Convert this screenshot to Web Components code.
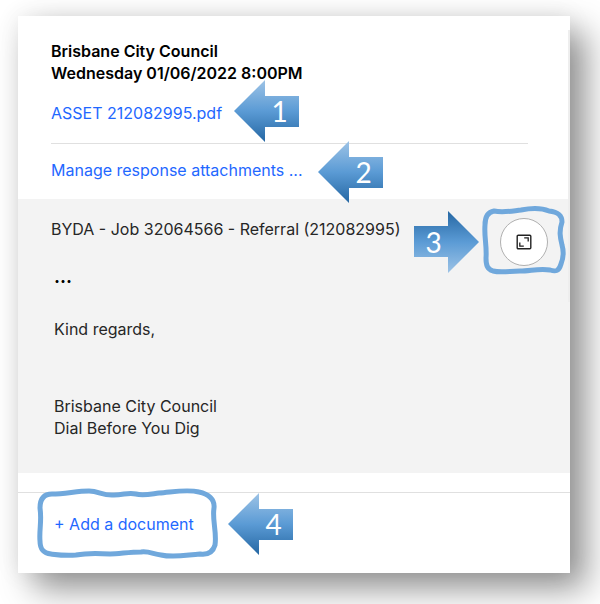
<!DOCTYPE html>
<html lang="en">
<head>
  <meta charset="UTF-8">
  <meta name="viewport" content="width=device-width, initial-scale=1.0">
  <title>Referral response</title>
  <style>
    body {
      margin: 0;
      padding: 16px 30px 31px 18px;
      background: #fff;
      color: #262626;
      font-family: Inter, "Open Sans", sans-serif;
      font-size: 16px;
      line-height: 22px;
    }
  </style>
</head>
<body>
  <response-card>
    <response-header slot="header" council="Brisbane City Council" date="Wednesday 01/06/2022 8:00PM">
      <callout-anchor>
        <text-link>ASSET 212082995.pdf</text-link>
        <step-arrow slot="note" style="--x: 183px; --y: -22px">1</step-arrow>
      </callout-anchor>
    </response-header>
    <callout-anchor slot="manage">
      <text-link>Manage response attachments ...</text-link>
      <step-arrow slot="note" style="--x: 267px; --y: -18px">2</step-arrow>
    </callout-anchor>
    <message-panel slot="message" subject="BYDA - Job 32064566 - Referral (212082995)">
      <callout-anchor slot="action">
        <expand-button></expand-button>
        <hand-outline slot="note" shape="square" style="--x: -20px; --y: -16px"></hand-outline>
        <step-arrow slot="note" direction="right" style="--x: -86px; --y: -7px">3</step-arrow>
      </callout-anchor>
      <div>Kind regards,</div>
      <div slot="signature">Brisbane City Council<br>Dial Before You Dig</div>
    </message-panel>
    <callout-anchor slot="footer">
      <text-link>+ Add a document</text-link>
      <hand-outline slot="note" shape="wide" style="--x: -19px; --y: -29px"></hand-outline>
      <step-arrow slot="note" style="--x: 174px; --y: -20px">4</step-arrow>
    </callout-anchor>
  </response-card>

  <script>
    class ResponseCard extends HTMLElement {
      constructor() {
        super();
        this.attachShadow({ mode: 'open' });
      }

      connectedCallback() {
        this.shadowRoot.innerHTML = `
          <style>
            :host {
              display: block;
              position: relative;
              background: #fff;
              box-shadow: 16px 16px 32px rgba(0, 0, 0, 0.42), 0 0 24px rgba(0, 0, 0, 0.08);
            }

            /* scroll track down the right side */
            :host::after {
              content: "";
              position: absolute;
              top: 14px;
              right: 0;
              width: 2px;
              height: 272px;
              background: #eee;
            }

            .top {
              padding: 24px 42px 18px 33px;
            }

            hr {
              margin: 19px 0 15px;
              border: 0;
              border-top: 1px solid #e0e0e0;
            }

            footer {
              margin-top: 19px;
              padding: 20px 36px 38px;
              border-top: 1px solid #e0e0e0;
            }
          </style>

          <div class="top">
            <slot name="header"></slot>
            <hr>
            <slot name="manage"></slot>
          </div>
          <slot name="message"></slot>
          <footer><slot name="footer"></slot></footer>
        `;
      }
    }

    class ResponseHeader extends HTMLElement {
      constructor() {
        super();
        this.attachShadow({ mode: 'open' });
      }

      connectedCallback() {
        this.shadowRoot.innerHTML = `
          <style>
            :host { display: block; }

            p {
              margin: 0 0 18px;
              color: #000;
              font-weight: 600;
            }
          </style>
          <p>${this.getAttribute('council')}<br>${this.getAttribute('date')}</p>
          <slot></slot>
        `;
      }
    }

    class TextLink extends HTMLElement {
      constructor() {
        super();
        this.attachShadow({ mode: 'open' });
      }

      connectedCallback() {
        this.shadowRoot.innerHTML = `
          <style>
            :host { display: block; }

            a {
              color: #1f68ff;
              text-decoration: none;

              &:hover { text-decoration: underline; }
            }
          </style>
          <a href="#"><slot></slot></a>
        `;
      }
    }

    class MessagePanel extends HTMLElement {
      constructor() {
        super();
        this.attachShadow({ mode: 'open' });
      }

      connectedCallback() {
        this.shadowRoot.innerHTML = `
          <style>
            :host {
              display: block;
              padding: 19px 22px 34px 33px;
              background: #f3f3f3;
            }

            .subject {
              display: flex;
              justify-content: space-between;
              align-items: flex-start;
            }

            .body {
              display: flex;
              flex-direction: column;
              padding-left: 3px;
            }

            .more {
              margin-bottom: 30px;
              color: #000;
              font-size: 18px;
              font-weight: 700;
            }

            .signature { margin-top: 55px; }
          </style>
          <div class="subject">
            <span>${this.getAttribute('subject')}</span>
            <slot name="action"></slot>
          </div>
          <div class="body">
            <span class="more">...</span>
            <slot></slot>
            <div class="signature"><slot name="signature"></slot></div>
          </div>
        `;
      }
    }

    class ExpandButton extends HTMLElement {
      constructor() {
        super();
        this.attachShadow({ mode: 'open' });
      }

      connectedCallback() {
        this.shadowRoot.innerHTML = `
          <style>
            :host { display: block; }

            button {
              display: flex;
              align-items: center;
              justify-content: center;
              width: 48px;
              height: 48px;
              padding: 0;
              border: 1px solid #b0b0b0;
              border-radius: 50%;
              background: #fff;
              cursor: pointer;
            }
          </style>
          <button type="button" aria-label="Expand message">
            <svg width="16" height="16" viewBox="0 0 16 16" fill="none" stroke="#222">
              <rect x="1.2" y="1.2" width="13.6" height="13.6" rx="1" stroke-width="1.4"/>
              <path d="M8.2 3.8H12.2V7.4M3.8 8.6V12.2H7.8" stroke-width="1.3"/>
            </svg>
          </button>
        `;
      }
    }

    // Holds page content and the notes that lie over it
    class CalloutAnchor extends HTMLElement {
      constructor() {
        super();
        this.attachShadow({ mode: 'open' });
      }

      connectedCallback() {
        this.shadowRoot.innerHTML = `
          <style>
            :host {
              display: block;
              position: relative;
            }

            ::slotted([slot="note"]) {
              position: absolute;
              left: var(--x);
              top: var(--y);
              z-index: 1;
              pointer-events: none;
            }
          </style>
          <slot></slot>
          <slot name="note"></slot>
        `;
      }
    }

    class StepArrow extends HTMLElement {
      constructor() {
        super();
        this.attachShadow({ mode: 'open' });
      }

      connectedCallback() {
        const turn = this.getAttribute('direction') === 'right' ? 'rotate(180 32.5 31)' : '';
        this.shadowRoot.innerHTML = `
          <style>
            :host {
              display: grid;
              width: 65px;
              height: 62px;
              color: #fff;
              font: 28px/62px Lato, sans-serif;
            }

            svg, span { grid-area: 1 / 1; }

            span {
              padding-left: 26px;
              text-align: center;
            }

            :host([direction="right"]) span { padding: 0 26px 0 0; }
          </style>
          <svg width="65" height="62" viewBox="0 0 65 62">
            <defs>
              <linearGradient id="blue" x1="0" y1="0" x2="0" y2="1">
                <stop offset="0" stop-color="#9dc3e6"/>
                <stop offset="0.5" stop-color="#5b9bd5"/>
                <stop offset="1" stop-color="#2567a3"/>
              </linearGradient>
            </defs>
            <g transform="${turn}">
              <path d="M0 31L31 0V16H65V47H31V62Z" fill="url(#blue)"/>
            </g>
          </svg>
          <span><slot></slot></span>
        `;
      }
    }

    const outlines = {
      square: {
        width: 90,
        height: 78,
        path: 'M5 23C5 14 8 10 14 9C23 11 32 9 41 8C51 6 62 6 69 9C78 10 82 13 82 20C79 29 80 35 82 43C84 50 83 57 81 62C79 69 76 70 70 68C60 66 50 69 40 69C30 69 21 71 13 69C7 67 6 63 6 56C7 44 4 35 5 23Z'
      },
      wide: {
        width: 186,
        height: 78,
        path: 'M5 24C5 15 9 10 17 10C30 10 42 7 54 7C64 7 68 12 79 11C89 11 93 8 101 10C108 12 116 10 124 9C138 8 152 5 164 8C173 10 180 15 179 24C177 36 182 48 180 61C178 68 173 71 165 70C151 71 139 74 126 71C118 70 114 67 106 68C94 68 84 70 75 70C62 69 51 69 41 71C31 72 24 71 16 70C8 69 5 65 5 57C4 46 7 37 5 24Z'
      }
    };

    class HandOutline extends HTMLElement {
      constructor() {
        super();
        this.attachShadow({ mode: 'open' });
      }

      connectedCallback() {
        const { width, height, path } = outlines[this.getAttribute('shape')];
        this.shadowRoot.innerHTML = `
          <style>
            :host { display: block; }

            svg { display: block; }
          </style>
          <svg width="${width}" height="${height}" viewBox="0 0 ${width} ${height}">
            <path d="${path}" fill="none" stroke="#70a8dc" stroke-width="5" stroke-linejoin="round"/>
          </svg>
        `;
      }
    }

    customElements.define('response-card', ResponseCard);
    customElements.define('response-header', ResponseHeader);
    customElements.define('text-link', TextLink);
    customElements.define('message-panel', MessagePanel);
    customElements.define('expand-button', ExpandButton);
    customElements.define('callout-anchor', CalloutAnchor);
    customElements.define('step-arrow', StepArrow);
    customElements.define('hand-outline', HandOutline);
  </script>
</body>
</html>
